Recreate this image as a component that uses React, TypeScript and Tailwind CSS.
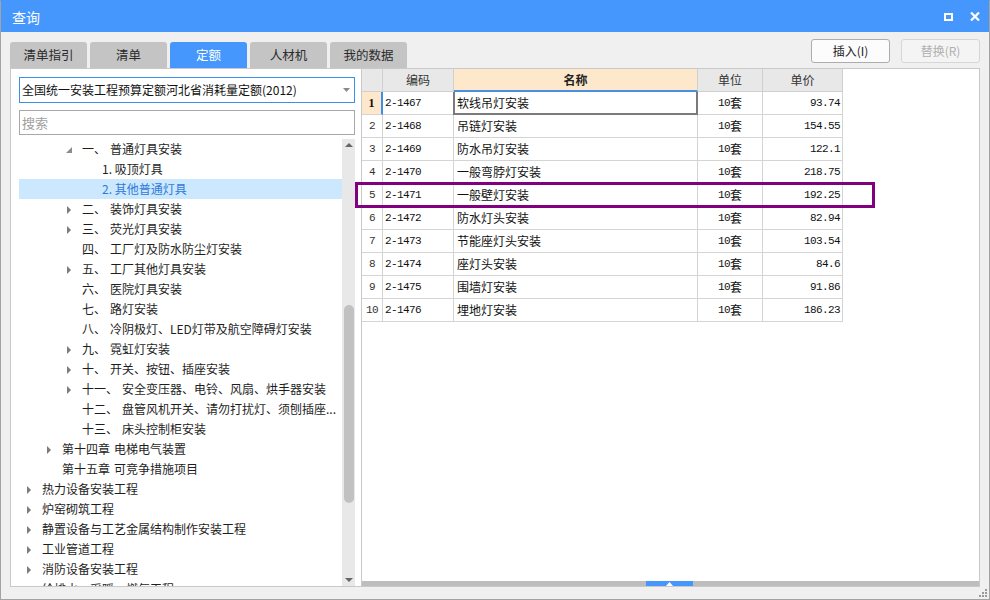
import React from 'react'

const ui = "font-['Microsoft_YaHei','Noto_Sans_CJK_SC',sans-serif]"
const mono = "font-['Liberation_Mono','Noto_Sans_CJK_SC',monospace]"
const cjk = "font-['Noto_Sans_CJK_SC',sans-serif]"

interface TreeNode {
  level: 1 | 2 | 3 | 4
  prefix?: string
  text: string
  arrow?: 'right' | 'down'
  selected?: boolean
}

const indent = {
  1: 'pl-[8px]',
  2: 'pl-[28px]',
  3: 'pl-[48px]',
  4: 'pl-[68px]',
}

const tree: TreeNode[] = [
  { level: 3, arrow: 'down', prefix: '一、', text: '普通灯具安装' },
  { level: 4, text: '1. 吸顶灯具' },
  { level: 4, text: '2. 其他普通灯具', selected: true },
  { level: 3, arrow: 'right', prefix: '二、', text: '装饰灯具安装' },
  { level: 3, arrow: 'right', prefix: '三、', text: '荧光灯具安装' },
  { level: 3, prefix: '四、', text: '工厂灯及防水防尘灯安装' },
  { level: 3, arrow: 'right', prefix: '五、', text: '工厂其他灯具安装' },
  { level: 3, prefix: '六、', text: '医院灯具安装' },
  { level: 3, prefix: '七、', text: '路灯安装' },
  { level: 3, prefix: '八、', text: '冷阴极灯、LED灯带及航空障碍灯安装' },
  { level: 3, arrow: 'right', prefix: '九、', text: '霓虹灯安装' },
  { level: 3, arrow: 'right', prefix: '十、', text: '开关、按钮、插座安装' },
  { level: 3, arrow: 'right', prefix: '十一、', text: '安全变压器、电铃、风扇、烘手器安装' },
  { level: 3, prefix: '十二、', text: '盘管风机开关、请勿打扰灯、须刨插座...' },
  { level: 3, prefix: '十三、', text: '床头控制柜安装' },
  { level: 2, arrow: 'right', prefix: '第十四章', text: '电梯电气装置' },
  { level: 2, prefix: '第十五章', text: '可竞争措施项目' },
  { level: 1, arrow: 'right', text: '热力设备安装工程' },
  { level: 1, arrow: 'right', text: '炉窑砌筑工程' },
  { level: 1, arrow: 'right', text: '静置设备与工艺金属结构制作安装工程' },
  { level: 1, arrow: 'right', text: '工业管道工程' },
  { level: 1, arrow: 'right', text: '消防设备安装工程' },
  { level: 1, arrow: 'right', text: '给排水、采暖、燃气工程' },
]

const rows = [
  ['2-1467', '软线吊灯安装', '93.74'],
  ['2-1468', '吊链灯安装', '154.55'],
  ['2-1469', '防水吊灯安装', '122.1'],
  ['2-1470', '一般弯脖灯安装', '218.75'],
  ['2-1471', '一般壁灯安装', '192.25'],
  ['2-1472', '防水灯头安装', '82.94'],
  ['2-1473', '节能座灯头安装', '103.54'],
  ['2-1474', '座灯头安装', '84.6'],
  ['2-1475', '围墙灯安装', '91.86'],
  ['2-1476', '埋地灯安装', '186.23'],
]

const tabs = ['清单指引', '清单', '定额', '人材机', '我的数据']

const Arrow = ({ dir }: { dir?: 'right' | 'down' }) => {
  if (dir === 'down')
    return (
      <svg width="6" height="6" viewBox="0 0 6 6" className="-ml-px mt-[2px]">
        <polygon points="6,0 6,6 0,6" fill="#8c8c8c" />
      </svg>
    )
  if (dir === 'right')
    return (
      <svg width="4" height="8" viewBox="0 0 4 8" className="mt-px">
        <polygon points="0,0 4,4 0,8" fill="#7b7b7b" />
      </svg>
    )
  return null
}

const TreeRow = ({ node }: { node: TreeNode }) => (
  <div
    className={`flex h-[20px] shrink-0 items-center whitespace-nowrap ${indent[node.level]} ${
      node.selected ? 'bg-[#cce8ff] text-[#2f7ad8]' : 'text-[#1e1e1e]'
    }`}
  >
    <span className="flex w-[15px] shrink-0 items-center">
      <Arrow dir={node.arrow} />
    </span>
    {node.prefix && <span>{node.prefix}</span>}
    <span className={node.prefix ? 'ml-[4px]' : ''}>{node.text}</span>
  </div>
)

export default function App() {
  return (
    <div
      className={`flex h-[600px] w-[990px] flex-col overflow-hidden border border-[#a3a3a3] border-t-[#4597fd] bg-[#f0f0f0] text-[12px] ${ui}`}
    >
      {/* Title bar */}
      <div className="flex h-[31px] shrink-0 items-center justify-between bg-[#4597fd] pl-[11px] pr-[9px]">
        <span className="text-[14px] leading-none text-white">查询</span>
        <div className="flex items-center gap-[17px]">
          <svg width="9" height="8" viewBox="0 0 9 8">
            <rect x="1" y="1" width="7" height="6" stroke="white" strokeWidth="2" fill="none" />
          </svg>
          <svg width="10" height="9" viewBox="0 0 10 9">
            <path d="M1 0.5 L9 8.5 M9 0.5 L1 8.5" stroke="white" strokeWidth="2.2" />
          </svg>
        </div>
      </div>

      <div className="flex flex-1 flex-col px-[9px]">
        {/* Tabs + actions */}
        <div className="flex h-[36px] shrink-0 justify-between">
          <div className="mt-[10px] flex gap-[3px]">
            {tabs.map((t) => (
              <div
                key={t}
                className={`flex h-[26px] w-[77px] items-center justify-center rounded-t-[3px] text-[12.5px] ${
                  t === '定额' ? 'bg-[#4597fd] text-white' : 'bg-[#c4c4c4] text-[#2a2a2a]'
                }`}
              >
                {t}
              </div>
            ))}
          </div>
          <div className="mt-[7px] flex gap-[11px]">
            <button className="h-[24px] w-[79px] rounded-[3px] border border-[#adadad] bg-[#fcfcfc] text-[12px] text-[#222]">
              插入(I)
            </button>
            <button className="h-[24px] w-[79px] rounded-[3px] border border-[#d6d6d6] bg-[#f4f4f4] text-[12px] text-[#b0b0b0]">
              替换(R)
            </button>
          </div>
        </div>

        {/* Main */}
        <div className="relative flex h-[519px] shrink-0">
          {/* Left panel */}
          <div className="flex w-[352px] shrink-0 flex-col border border-[#c9c9c9] bg-white pl-[8px] pr-[6px] pt-[8px]">
            <div className="flex h-[26px] shrink-0 items-center justify-between border border-[#3d8ee8] pl-[2px] pr-[4px] text-[#111]">
              <span className="text-[12px]">全国统一安装工程预算定额河北省消耗量定额(2012)</span>
              <svg width="7" height="4" viewBox="0 0 7 4">
                <polygon points="0,0 7,0 3.5,4" fill="#8a8a8a" />
              </svg>
            </div>
            <div className="mt-[7px] flex h-[25px] shrink-0 items-center border border-[#a8a8a8] pl-[2px] text-[13px] text-[#a0a0a0]">
              搜索
            </div>
            <div className="mt-[4px] flex h-[447px] shrink-0 overflow-hidden">
              <div className="flex flex-1 flex-col overflow-hidden">
                {tree.map((n, i) => (
                  <TreeRow key={i} node={n} />
                ))}
              </div>
              <div className="flex w-[13px] shrink-0 flex-col items-center bg-[#e8e8e8]">
                <div className="flex h-[12px] shrink-0 items-center justify-center">
                  <svg width="8" height="4" viewBox="0 0 8 4">
                    <polygon points="0,4 8,4 4,0" fill="#666" />
                  </svg>
                </div>
                <div className="mt-[154px] h-[198px] w-[10px] shrink-0 rounded-[5px] bg-[#c1c1c1]" />
                <div className="flex-1" />
                <div className="flex h-[12px] shrink-0 items-center justify-center">
                  <svg width="8" height="4" viewBox="0 0 8 4">
                    <polygon points="0,0 8,0 4,4" fill="#666" />
                  </svg>
                </div>
              </div>
            </div>
          </div>

          {/* Right panel */}
          <div className="flex flex-1 flex-col border-y border-r border-[#c9c9c9] bg-white">
            <div className="flex-1">
              {/* Header */}
              <div className="flex h-[23px] text-[#333]">
                <div className="w-[21px] border-b border-r border-[#cfcfcf] bg-[#e8e8e8]" />
                <div className="flex w-[71px] items-center justify-center border-b border-r border-[#cfcfcf] bg-[#e8e8e8]">
                  编码
                </div>
                <div className="flex w-[244px] items-center justify-center border-b-2 border-r border-b-[#4a90e2] border-r-[#cfcfcf] bg-[#fde8cc] font-bold text-[#222]">
                  名称
                </div>
                <div className="flex w-[65px] items-center justify-center border-b border-r border-[#cfcfcf] bg-[#e8e8e8]">
                  单位
                </div>
                <div className="flex w-[80px] items-center justify-center border-b border-r border-[#cfcfcf] bg-[#e8e8e8]">
                  单价
                </div>
              </div>
              {/* Rows */}
              {rows.map(([code, name, price], i) => (
                <div key={code} className="flex h-[23px] text-[#111]">
                  <div
                    className={`flex w-[21px] items-center justify-center border-b border-[#d4d4d4] ${
                      i === 0
                        ? "border-r-2 border-r-[#3d8ee8] bg-[#fde8cc] font-['Liberation_Serif',serif] font-bold"
                        : `border-r ${mono} tracking-[-0.6px] text-[11px] text-[#333]`
                    }`}
                  >
                    {i + 1}
                  </div>
                  <div
                    className={`flex w-[71px] items-center border-b border-r border-[#d4d4d4] pl-[2px] text-[11px] tracking-[-0.6px] ${mono}`}
                  >
                    {code}
                  </div>
                  <div className={`relative flex w-[244px] items-center border-b border-r border-[#d4d4d4] pl-[3px] ${cjk}`}>
                    {name}
                    {i === 0 && (
                      <div className="absolute -bottom-px -left-px -right-px top-0 border-2 border-t-0 border-[#7a7a7a]" />
                    )}
                  </div>
                  <div className="flex w-[65px] items-center justify-center border-b border-r border-[#d4d4d4]">
                    <span className={`text-[11px] tracking-[-0.6px] ${mono}`}>10</span>
                    <span className={cjk}>套</span>
                  </div>
                  <div
                    className={`flex w-[80px] items-center justify-end border-b border-r border-[#d4d4d4] pr-[2px] text-[11px] tracking-[-0.6px] ${mono}`}
                  >
                    {price}
                  </div>
                </div>
              ))}
            </div>
            {/* splitter bar */}
            <div className="flex h-[5px] shrink-0 bg-[#bdbdbd]">
              <div className="ml-[284px] flex h-[5px] w-[47px] items-center justify-center bg-[#4597fd]">
                <svg width="7" height="4" viewBox="0 0 7 4">
                  <polygon points="0,4 7,4 3.5,0" fill="white" />
                </svg>
              </div>
            </div>
          </div>

          {/* highlight annotation */}
          <div className="absolute left-[345px] top-[114px] h-[26px] w-[520px] border-[3px] border-[#800080]" />
        </div>

        {/* status strip */}
        <div className="flex flex-1 items-end justify-end">
          <div className="-mr-[7px] mb-[2px] grid grid-cols-3 gap-px">
            <span className="h-[2px] w-[2px]" />
            <span className="h-[2px] w-[2px]" />
            <span className="h-[2px] w-[2px] bg-[#9a9a9a]" />
            <span className="h-[2px] w-[2px]" />
            <span className="h-[2px] w-[2px] bg-[#9a9a9a]" />
            <span className="h-[2px] w-[2px] bg-[#9a9a9a]" />
            <span className="h-[2px] w-[2px] bg-[#9a9a9a]" />
            <span className="h-[2px] w-[2px] bg-[#9a9a9a]" />
            <span className="h-[2px] w-[2px] bg-[#9a9a9a]" />
          </div>
        </div>
      </div>
    </div>
  )
}
